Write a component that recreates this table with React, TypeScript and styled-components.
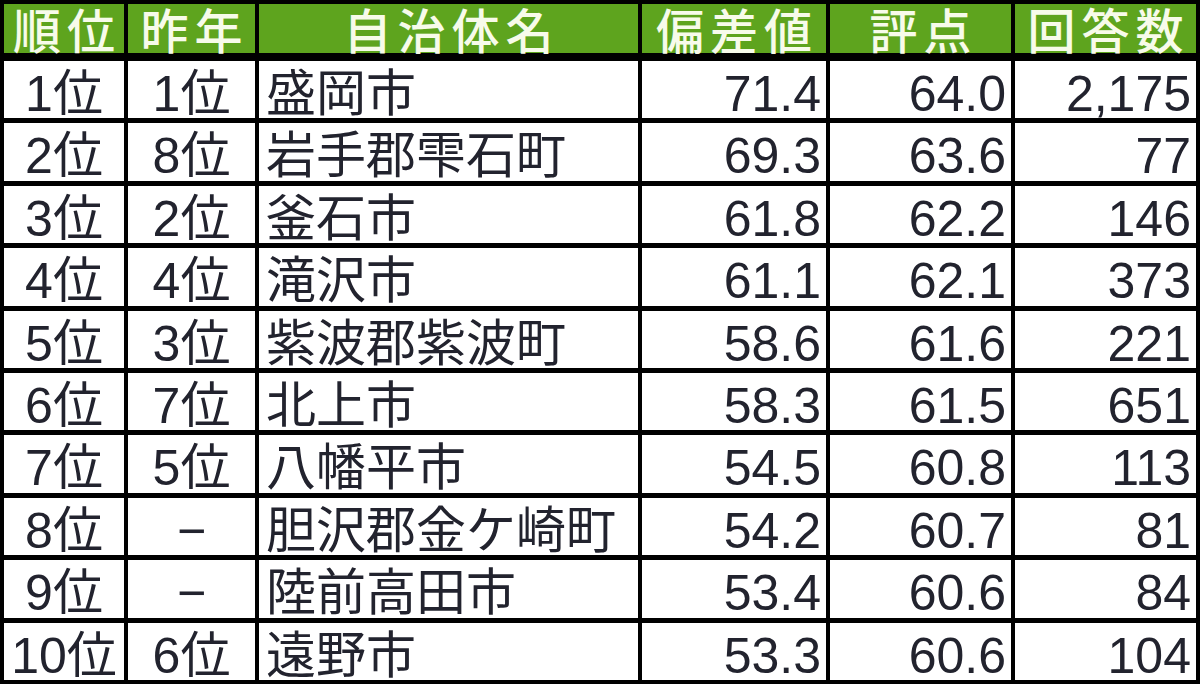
import React from "react";
import styled, { createGlobalStyle } from "styled-components";

const GlobalStyle = createGlobalStyle`
  html, body {
    margin: 0;
    padding: 0;
    background: #ffffff;
  }
  body {
    font-family: "Liberation Sans", "Noto Sans CJK JP", sans-serif;
  }
`;

const COLS = "120px 127px 379px 184px 181px 181px";

const Table = styled.div`
  width: 1200px;
  height: 684px;
  box-sizing: border-box;
  background: #000000;
  padding: 4px;
  display: flex;
  flex-direction: column;
  gap: 5px;
`;

const HeaderRow = styled.div`
  display: grid;
  grid-template-columns: ${COLS};
  column-gap: 4px;
  height: 49px;
  flex: 0 0 49px;
  margin-bottom: 3px;
`;

const HeaderCell = styled.div`
  background: #5ea41e;
  color: #f7fbea;
  font-family: "Liberation Sans", "Noto Sans CJK JP", sans-serif;
  font-weight: 500;
  font-size: 48px;
  line-height: 40px;
  letter-spacing: 6px;
  padding-left: 6px;
  padding-top: 9px;
  box-sizing: border-box;
  text-align: center;
  white-space: nowrap;
`;

const Row = styled.div`
  display: grid;
  grid-template-columns: ${COLS};
  column-gap: 4px;
  flex: 1 1 0;
  min-height: 0;
`;

const Cell = styled.div<{ $align: "center" | "left" | "right" }>`
  background: #ffffff;
  color: #22232e;
  font-family: "Liberation Sans", "Noto Sans CJK JP", sans-serif;
  font-size: 50px;
  line-height: 48px;
  padding-top: 9px;
  padding-left: ${(p) => (p.$align === "left" ? "7px" : "0")};
  padding-right: ${(p) => (p.$align === "right" ? "5px" : "0")};
  box-sizing: border-box;
  text-align: ${(p) => p.$align};
  white-space: nowrap;
`;

type Item = {
  rank: string;
  prev: string;
  name: string;
  dev: string;
  score: string;
  count: string;
};

const data: Item[] = [
  { rank: "1位", prev: "1位", name: "盛岡市", dev: "71.4", score: "64.0", count: "2,175" },
  { rank: "2位", prev: "8位", name: "岩手郡雫石町", dev: "69.3", score: "63.6", count: "77" },
  { rank: "3位", prev: "2位", name: "釜石市", dev: "61.8", score: "62.2", count: "146" },
  { rank: "4位", prev: "4位", name: "滝沢市", dev: "61.1", score: "62.1", count: "373" },
  { rank: "5位", prev: "3位", name: "紫波郡紫波町", dev: "58.6", score: "61.6", count: "221" },
  { rank: "6位", prev: "7位", name: "北上市", dev: "58.3", score: "61.5", count: "651" },
  { rank: "7位", prev: "5位", name: "八幡平市", dev: "54.5", score: "60.8", count: "113" },
  { rank: "8位", prev: "−", name: "胆沢郡金ケ崎町", dev: "54.2", score: "60.7", count: "81" },
  { rank: "9位", prev: "−", name: "陸前高田市", dev: "53.4", score: "60.6", count: "84" },
  { rank: "10位", prev: "6位", name: "遠野市", dev: "53.3", score: "60.6", count: "104" },
];

const headers = ["順位", "昨年", "自治体名", "偏差値", "評点", "回答数"];

export default function App() {
  return (
    <>
      <GlobalStyle />
      <Table>
        <HeaderRow>
          {headers.map((h) => (
            <HeaderCell key={h}>{h}</HeaderCell>
          ))}
        </HeaderRow>
        {data.map((d) => (
          <Row key={d.rank}>
            <Cell $align="center">{d.rank}</Cell>
            <Cell $align="center">{d.prev}</Cell>
            <Cell $align="left">{d.name}</Cell>
            <Cell $align="right">{d.dev}</Cell>
            <Cell $align="right">{d.score}</Cell>
            <Cell $align="right">{d.count}</Cell>
          </Row>
        ))}
      </Table>
    </>
  );
}
